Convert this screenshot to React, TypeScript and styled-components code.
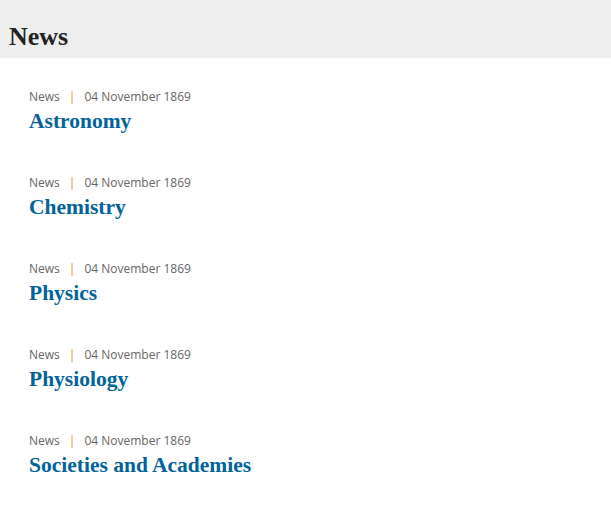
import React from 'react';
import styled, { createGlobalStyle } from 'styled-components';

const GlobalStyle = createGlobalStyle`
  body {
    margin: 0;
    background-color: #ffffff;
  }
`;

const Page = styled.div`
  width: 611px;
  min-height: 517px;
  background-color: #ffffff;
`;

const Header = styled.header`
  height: 58px;
  background-color: #eeeeee;
  padding-left: 9px;

  display: flex;
  align-items: center;
`;

const HeaderTitle = styled.h1`
  margin: 0;
  margin-top: 15px;
  font-family: 'Liberation Serif', serif;
  font-size: 26px;
  font-weight: bold;
  color: #222222;
`;

const List = styled.ul`
  list-style: none;
  margin: 0;
  padding: 29px 0 0 29px;

  display: flex;
  flex-direction: column;
  gap: 39px;
`;

const Item = styled.li`
  display: flex;
  flex-direction: column;
`;

const Meta = styled.div`
  font-family: 'Open Sans', sans-serif;
  font-size: 12px;
  line-height: 20px;
  color: #666666;

  display: flex;
  align-items: center;
`;

const Divider = styled.span`
  color: #d98c2b;
  margin: 0 9px;
`;

const Title = styled.a`
  font-family: 'Liberation Serif', serif;
  font-size: 21.5px;
  line-height: 26px;
  font-weight: bold;
  color: #006399;
  text-decoration: none;
  margin-top: 1px;
`;

const articles = ['Astronomy', 'Chemistry', 'Physics', 'Physiology', 'Societies and Academies'];

const App: React.FC = () => {
  return (
    <>
      <GlobalStyle />
      <Page>
        <Header>
          <HeaderTitle>News</HeaderTitle>
        </Header>

        <List>
          {articles.map((title) => (
            <Item key={title}>
              <Meta>
                News<Divider>|</Divider>04 November 1869
              </Meta>
              <Title href="#">{title}</Title>
            </Item>
          ))}
        </List>
      </Page>
    </>
  );
};

export default App;
